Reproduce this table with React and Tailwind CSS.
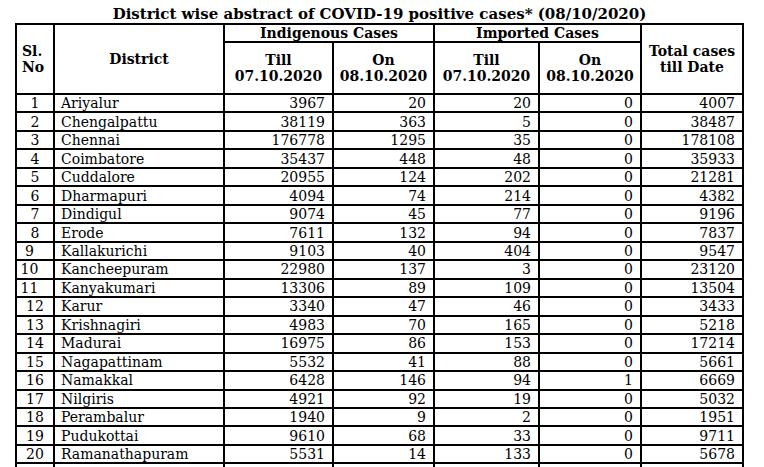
import React from "react";

const rows = [
  [1, "Ariyalur", 3967, 20, 20, 0, 4007],
  [2, "Chengalpattu", 38119, 363, 5, 0, 38487],
  [3, "Chennai", 176778, 1295, 35, 0, 178108],
  [4, "Coimbatore", 35437, 448, 48, 0, 35933],
  [5, "Cuddalore", 20955, 124, 202, 0, 21281],
  [6, "Dharmapuri", 4094, 74, 214, 0, 4382],
  [7, "Dindigul", 9074, 45, 77, 0, 9196],
  [8, "Erode", 7611, 132, 94, 0, 7837],
  [9, "Kallakurichi", 9103, 40, 404, 0, 9547],
  [10, "Kancheepuram", 22980, 137, 3, 0, 23120],
  [11, "Kanyakumari", 13306, 89, 109, 0, 13504],
  [12, "Karur", 3340, 47, 46, 0, 3433],
  [13, "Krishnagiri", 4983, 70, 165, 0, 5218],
  [14, "Madurai", 16975, 86, 153, 0, 17214],
  [15, "Nagapattinam", 5532, 41, 88, 0, 5661],
  [16, "Namakkal", 6428, 146, 94, 1, 6669],
  [17, "Nilgiris", 4921, 92, 19, 0, 5032],
  [18, "Perambalur", 1940, 9, 2, 0, 1951],
  [19, "Pudukottai", 9610, 68, 33, 0, 9711],
  [20, "Ramanathapuram", 5531, 14, 133, 0, 5678],
  ["", "", "", "", "", "", ""],
];

const cell = "border-r-2 border-b-2 border-black";
const num = `${cell} flex items-center justify-end pr-[7px]`;

export default function App() {
  return (
    <div
      className="w-[764px] h-[467px] overflow-hidden bg-white text-black"
      style={{ fontFamily: '"DejaVu Serif", serif' }}
    >
      <div className="h-[23px] pt-[6px] text-center font-bold text-[15px] leading-[17px] pl-[15px] w-[744px]">
        District wise abstract of COVID-19 positive cases* (08/10/2020)
      </div>
      <div className="ml-[15px] w-[729px] border-l-2 border-t-2 border-black grid grid-cols-[38px_170px_109px_101px_105px_102px_102px] grid-rows-[18px_52px] auto-rows-[18.47px] text-[14px] leading-[16px]">
        <div className={`${cell} row-span-2 flex flex-col justify-center pl-[5px] font-bold`}>
          <span>Sl.</span>
          <span>No</span>
        </div>
        <div className={`${cell} row-span-2 flex items-center justify-center font-bold`}>District</div>
        <div className={`${cell} col-span-2 flex items-center justify-center font-bold`}>Indigenous Cases</div>
        <div className={`${cell} col-span-2 flex items-center justify-center font-bold`}>Imported Cases</div>
        <div className={`${cell} row-span-2 flex flex-col items-center justify-center font-bold text-center`}>
          <span>Total cases</span>
          <span>till Date</span>
        </div>
        {["Till|07.10.2020", "On|08.10.2020", "Till|07.10.2020", "On|08.10.2020"].map((t, i) => (
          <div key={i} className={`${cell} flex flex-col items-center justify-center font-bold text-center`}>
            <span>{t.split("|")[0]}</span>
            <span>{t.split("|")[1]}</span>
          </div>
        ))}
        {rows.map((r) => (
          <React.Fragment key={r[1] || "blank"}>
            <div
              className={`${cell} flex items-center justify-center ${
                r[0] >= 9 && r[0] <= 11 ? "pr-[11px]" : ""
              }`}
            >
              {r[0]}
            </div>
            <div className={`${cell} flex items-center pl-[6px]`}>{r[1]}</div>
            <div className={num}>{r[2]}</div>
            <div className={num}>{r[3]}</div>
            <div className={num}>{r[4]}</div>
            <div className={num}>{r[5]}</div>
            <div className={num}>{r[6]}</div>
          </React.Fragment>
        ))}
      </div>
    </div>
  );
}
